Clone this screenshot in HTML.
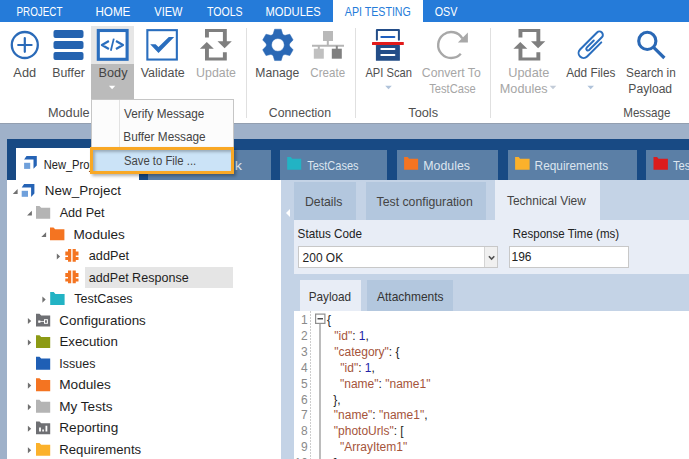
<!DOCTYPE html>
<html><head><meta charset="utf-8">
<style>
*{margin:0;padding:0;box-sizing:border-box}
html,body{width:689px;height:459px;overflow:hidden;background:#9fb1c9;font-family:"Liberation Sans",sans-serif}
.a{position:absolute}
</style></head><body>
<!-- menu bar -->
<div class="a" style="left:0;top:0;width:689px;height:22px;background:#257bd9"></div>
<div class="a" style="left:0;top:22px;width:689px;height:1px;background:#70a8e6"></div>
<div class="a" style="left:332.5px;top:0;width:90.5px;height:23px;background:#fff"></div>
<svg class="a" style="left:0;top:0" width="689" height="459" font-family="Liberation Sans"><text transform="matrix(0.8206,0,0,1,16.48,15.80)" font-size="12" fill="#ffffff">PROJECT</text><text transform="matrix(0.9722,0,0,1,95.41,15.80)" font-size="12" fill="#ffffff">HOME</text><text transform="matrix(0.9221,0,0,1,154.30,15.80)" font-size="12" fill="#ffffff">VIEW</text><text transform="matrix(0.8818,0,0,1,207.01,15.80)" font-size="12" fill="#ffffff">TOOLS</text><text transform="matrix(0.9309,0,0,1,265.56,15.80)" font-size="12" fill="#ffffff">MODULES</text><text transform="matrix(0.8965,0,0,1,434.66,15.80)" font-size="12" fill="#ffffff">OSV</text><text transform="matrix(0.8880,0,0,1,344.81,15.80)" font-size="12" fill="#257bd9">API TESTING</text></svg>
<!-- ribbon -->
<div class="a" style="left:0;top:22px;width:689px;height:101px;background:#fff"></div>
<div class="a" style="left:246px;top:28px;width:1px;height:90px;background:#e0e0e0"></div>
<div class="a" style="left:355px;top:28px;width:1px;height:90px;background:#e0e0e0"></div>
<div class="a" style="left:490px;top:28px;width:1px;height:90px;background:#e0e0e0"></div>
<div class="a" style="left:91px;top:26px;width:43px;height:38px;background:#e6e6e6"></div>
<div class="a" style="left:91px;top:63.5px;width:43px;height:35.5px;background:#bbbbbb"></div>
<svg class="a" style="left:0;top:0" width="689" height="123" viewBox="0 0 689 123">
 <!-- Add -->
 <circle cx="24.8" cy="45" r="13" fill="none" stroke="#2a6ab8" stroke-width="2.3"/>
 <path d="M18.2 45H31.6M24.8 38V51.8" stroke="#2a6ab8" stroke-width="2.2" stroke-linecap="round"/>
 <!-- Buffer -->
 <rect x="53.5" y="30" width="30" height="8" rx="2" fill="#2563b0"/>
 <rect x="53.5" y="41" width="30" height="8" rx="2" fill="#2563b0"/>
 <rect x="53.5" y="52" width="30" height="8" rx="2" fill="#2563b0"/>
 <!-- Body -->
 <rect x="98.3" y="30.5" width="28.8" height="28.8" fill="#fff" stroke="#2a6ebe" stroke-width="3.1"/>
 <path d="M108.9 41L101.9 45L108.9 49M116 41L123 45L116 49" fill="none" stroke="#2a6ebe" stroke-width="2.2" stroke-linejoin="round"/>
 <path d="M113.8 38.6L110.8 50.8" stroke="#2a6ebe" stroke-width="1.8"/>
 <!-- Validate -->
 <rect x="147.35" y="30.15" width="29.5" height="29.4" fill="none" stroke="#2a6ebe" stroke-width="2.1"/>
 <path d="M150.2 44.2H155.6L158.5 47.1L168.8 37H174.2L158.5 52.9Z" fill="#2a6ebe"/>
 <!-- Update -->
 <g fill="#7f7f7f" id="upd">
  <path d="M205 29.1H226.8V41.3H231.8L224.6 48.3L217.5 41.3H222.9V32.1H208.9V37.6H205Z"/>
  <path d="M206.8 41.9L213.8 48.8H208.9V57.4H222.9V52.3H226.8V60.4H205V48.8H199.9Z"/>
 </g>
 <!-- Manage gear -->
 <path fill="#2a68b5" fill-rule="evenodd" stroke="#2a68b5" stroke-width="0.5" stroke-linejoin="round" d="M273.30 33.60L274.60 29.24L281.20 29.24L282.50 33.60Q283.20 35.72 285.39 35.27L289.81 34.21L293.11 39.93L289.99 43.23Q288.50 44.90 289.99 46.57L293.11 49.87L289.81 55.59L285.39 54.53Q283.20 54.08 282.50 56.20L281.20 60.56L274.60 60.56L273.30 56.20Q272.60 54.08 270.41 54.53L265.99 55.59L262.69 49.87L265.81 46.57Q267.30 44.90 265.81 43.23L262.69 39.93L265.99 34.21L270.41 35.27Q272.60 35.72 273.30 33.60ZM284.30 44.9A6.4 6.4 0 1 0 271.50 44.9A6.4 6.4 0 1 0 284.30 44.9Z"/>
 <!-- Create -->
 <rect x="323" y="31" width="10" height="10" fill="#b9b9b9"/>
 <path d="M327.8 40.5V45.8M312 45.8H344M318.8 45.8V49" stroke="#b5b5b5" stroke-width="2"/>
 <path d="M336.8 45.8V49" stroke="#888" stroke-width="2"/>
 <rect x="313.8" y="48.7" width="10" height="10" fill="#c0c0c0"/>
 <rect x="331.8" y="48.7" width="10" height="10" fill="#808080"/>
 <!-- API Scan -->
 <path d="M376.9 39.7V30.1H398.9V39.7" fill="none" stroke="#234d88" stroke-width="2" stroke-linecap="round" stroke-linejoin="round"/>
 <path d="M381.3 37H394.4" stroke="#1f5fbf" stroke-width="2" stroke-linecap="round"/>
 <rect x="375.9" y="44.9" width="24" height="15.9" rx="0.6" fill="#234d88"/>
 <rect x="372" y="41.9" width="31.8" height="3" rx="0.5" fill="#e21b1b"/>
 <path d="M381.3 49H394.4M381.3 55H394.4" stroke="#fff" stroke-width="2" stroke-linecap="round"/>
 <!-- Convert -->
 <path d="M460.8 53.8A13 13 0 1 1 462.3 38.3" fill="none" stroke="#a8a8a8" stroke-width="2.4"/>
 <path d="M467.9 32.5V42.6H457.9Z" fill="#a8a8a8"/>
 <!-- Update Modules -->
 <g fill="#7f7f7f" transform="translate(313.5,0)">
  <path d="M205 29.1H226.8V41.3H231.8L224.6 48.3L217.5 41.3H222.9V32.1H208.9V37.6H205Z"/>
  <path d="M206.8 41.9L213.8 48.8H208.9V57.4H222.9V52.3H226.8V60.4H205V48.8H199.9Z"/>
 </g>
 <!-- Add files paperclip -->
 <path d="M600.68 41.4L586.54 55.54A5 5 0 0 1 579.46 48.46L596.43 31.49A3.4 3.4 0 0 1 601.24 36.3L588.51 49.03A1.7 1.7 0 0 1 586.11 46.63L593.18 39.56" fill="none" stroke="#2a6ebe" stroke-width="2" stroke-linecap="round" transform="translate(0.6,1)"/>
 <!-- Search -->
 <circle cx="647.3" cy="40.9" r="8.6" fill="none" stroke="#2a68b5" stroke-width="3.1"/>
 <path d="M653.6 47.4L664.4 58" stroke="#2a68b5" stroke-width="3.2"/>
 <!-- dropdown arrows -->
 <path d="M385.2 85.8H391.8L388.5 89.3Z" fill="#b0c3da"/>
 <path d="M549.7 85.8H556.3L553 89.3Z" fill="#c3ccd8"/>
 <path d="M587.4 85.8H594L590.7 89.3Z" fill="#b0c3da"/>
 <path d="M108.9 85.8H115.3L112.1 89.3Z" fill="#fff"/>
</svg>
<svg class="a" style="left:0;top:0" width="689" height="459" font-family="Liberation Sans"><text transform="matrix(1.0666,0,0,1,13.36,76.80)" font-size="12" fill="#4f4f4f">Add</text><text transform="matrix(1.0267,0,0,1,52.25,76.80)" font-size="12" fill="#4f4f4f">Buffer</text><text transform="matrix(1.0565,0,0,1,98.62,76.80)" font-size="12" fill="#444">Body</text><text transform="matrix(1.0401,0,0,1,140.66,76.80)" font-size="12" fill="#4f4f4f">Validate</text><text transform="matrix(1.0336,0,0,1,196.06,76.80)" font-size="12" fill="#a6a6a6">Update</text><text transform="matrix(1.0134,0,0,1,255.27,76.80)" font-size="12" fill="#4f4f4f">Manage</text><text transform="matrix(0.9658,0,0,1,310.37,76.80)" font-size="12" fill="#a6a6a6">Create</text><text transform="matrix(0.9303,0,0,1,365.40,76.80)" font-size="12" fill="#4f4f4f">API Scan</text><text transform="matrix(1.0195,0,0,1,421.80,76.80)" font-size="12" fill="#a6a6a6">Convert To</text><text transform="matrix(0.9304,0,0,1,429.20,92.60)" font-size="12" fill="#a6a6a6">TestCase</text><text transform="matrix(1.0608,0,0,1,508.33,76.80)" font-size="12" fill="#a6a6a6">Update</text><text transform="matrix(1.0547,0,0,1,499.82,92.60)" font-size="12" fill="#a6a6a6">Modules</text><text transform="matrix(0.9848,0,0,1,566.18,76.80)" font-size="12" fill="#4f4f4f">Add Files</text><text transform="matrix(0.9814,0,0,1,626.06,76.80)" font-size="12" fill="#4f4f4f">Search in</text><text transform="matrix(1.0084,0,0,1,628.37,92.60)" font-size="12" fill="#4f4f4f">Payload</text><text transform="matrix(1.0599,0,0,1,47.92,116.90)" font-size="12" fill="#4f4f4f">Module</text><text transform="matrix(1.0257,0,0,1,268.80,116.90)" font-size="12" fill="#4f4f4f">Connection</text><text transform="matrix(1.0643,0,0,1,408.25,116.90)" font-size="12" fill="#4f4f4f">Tools</text><text transform="matrix(0.9692,0,0,1,623.22,116.90)" font-size="12" fill="#4f4f4f">Message</text></svg>

<div class="a" style="left:0;top:123px;width:689px;height:1px;background:#939fb0"></div>
<!-- tab strip -->
<div class="a" style="left:7px;top:139px;width:682px;height:41px;background:#184a84"></div>
<div class="a" style="left:16px;top:148px;width:123px;height:32px;background:#fff"></div>
<div class="a" style="left:148px;top:150px;width:122.5px;height:30px;background:#5b7fa6"></div>
<div class="a" style="left:280px;top:150px;width:106.6px;height:30px;background:#5b7fa6"></div>
<div class="a" style="left:396.7px;top:150px;width:101.3px;height:30px;background:#5b7fa6"></div>
<div class="a" style="left:507.8px;top:150px;width:128.8px;height:30px;background:#5b7fa6"></div>
<div class="a" style="left:646px;top:150px;width:60px;height:30px;background:#5b7fa6"></div>
<svg class="a" style="left:0;top:0" width="689" height="180">
 <path d="M26.5 156H36.8V165.6L33.5 168.8V159.5H24.1Z" fill="#2563b5"/>
 <rect x="24.1" y="162.8" width="6.1" height="6.1" fill="#6fa0db"/>
 <path d="M287.2 157H290.8L292.2 158.8H301.2V169.8H287.2Z" fill="#22b3c4"/>
 <path d="M404.1 157H407.7L409.1 158.8H418.1V169.8H404.1Z" fill="#f47421"/>
 <path d="M515.1 157H518.7L520.1 158.8H529.6V169.8H515.1Z" fill="#fbb12b"/>
 <path d="M653.5 157H657.1L658.5 158.8H667.9V169.8H653.5Z" fill="#dd1c1c"/>
</svg>
<svg class="a" style="left:0;top:0" width="689" height="459" font-family="Liberation Sans"><text transform="matrix(0.8986,0,0,1,43.67,169.40)" font-size="12.4" fill="#222222">New_Project</text><text transform="matrix(1.1997,0,0,1,234.68,169.80)" font-size="12" fill="#dce5ef">k</text><text transform="matrix(0.9007,0,0,1,307.19,169.80)" font-size="12.2" fill="#dce5ef">TestCases</text><text transform="matrix(1.0133,0,0,1,423.26,169.80)" font-size="12.2" fill="#dce5ef">Modules</text><text transform="matrix(0.9705,0,0,1,534.61,169.80)" font-size="12.2" fill="#dce5ef">Requirements</text><text transform="matrix(0.9200,0,0,1,672.88,169.80)" font-size="12.2" fill="#dce5ef">TestCases</text></svg>

<!-- tree -->
<div class="a" style="left:7px;top:180px;width:274px;height:279px;background:#fff"></div>
<div class="a" style="left:85px;top:267px;width:148px;height:21px;background:#e5e5e5"></div>
<svg class="a" style="left:0;top:0" width="281" height="459">
 <g fill="#707070">
  <path d="M17.6 189.1V193.9H12.8Z"/>
  <path d="M31.85 210.7V215.5H27.05Z"/>
  <path d="M46.1 232.3V237.1H41.3Z"/>
  <path d="M56.8 253.4L60.1 256.4L56.8 259.5Z"/>
  <path d="M42.4 296.6L45.7 299.6L42.4 302.7Z"/>
  <path d="M27.9 317.9L31.2 320.9L27.9 324Z"/>
  <path d="M27.9 339.45L31.2 342.45L27.9 345.55Z"/>
  <path d="M27.9 382.55L31.2 385.55L27.9 388.65Z"/>
  <path d="M27.9 404.1L31.2 407.1L27.9 410.2Z"/>
  <path d="M27.9 425.65L31.2 428.65L27.9 431.75Z"/>
  <path d="M27.9 447.2L31.2 450.2L27.9 453.3Z"/>
 </g>
 <!-- project icon -->
 <path d="M24.1 184H34.4V193.6L31.1 196.9V187.5H21.7Z" fill="#2563b5"/>
 <rect x="21.7" y="190.8" width="6.3" height="6" fill="#6fa0db"/>
 <!-- folders: x, top -->
 <path d="M36 205.9H39.5L41.2 207.7H50.2V218.8H36Z" fill="#b4b4b4"/>
 <path d="M50 227.45H53.5L55.2 229.25H64.4V240.35H50Z" fill="#f47421"/>
 <path d="M50.2 292.1H53.7L55.4 293.9H64.6V305H50.2Z" fill="#22b3c4"/>
 <path d="M36 313.65H39.5L41.2 315.45H50.2V326.55H36Z" fill="#6e6f73"/>
 <path d="M38.2 320.5H40.4V322.7H38.2Z M40.4 321.3H44V322H40.4Z" fill="#fff"/>
 <rect x="44.5" y="319.7" width="2.9" height="3.6" fill="none" stroke="#fff" stroke-width="1"/>
 <path d="M36 335.2H39.5L41.2 337H50.2V348.1H36Z" fill="#8c9a14"/>
 <path d="M36 356.75H39.5L41.2 358.55H50.2V369.65H36Z" fill="#1f5fb5"/>
 <path d="M36 378.3H39.5L41.2 380.1H50.2V391.2H36Z" fill="#f47421"/>
 <path d="M36 399.85H39.5L41.2 401.65H50.2V412.75H36Z" fill="#b4b4b4"/>
 <path d="M36 421.4H39.5L41.2 423.2H50.2V434.3H36Z" fill="#6e6f73"/>
 <path d="M39.1 427.5H40.9V431.6H39.1Z M42.3 429.4H43.9V431.6H42.3Z M45.5 425.7H47.3V431.6H45.5Z" fill="#fff"/>
 <path d="M36 442.95H39.5L41.2 444.75H50.2V455.85H36Z" fill="#fbb12b"/>
 <!-- module icons -->
 <g fill="#f47421">
  <path d="M68 249H71.2V261.8H68V260H65.3V257H68V255.5H65.3V251.5H68Z"/>
  <path d="M72.6 249H75.8V251.5H78.5V255.5H75.8V257H78.5V260H75.8V261.8H72.6Z"/>
  <path d="M68 270.5H71.2V283.3H68V281.5H65.3V278.5H68V277H65.3V273H68Z"/>
  <path d="M72.6 270.5H75.8V273H78.5V277H75.8V278.5H78.5V281.5H75.8V283.3H72.6Z"/>
 </g>
</svg>
<svg class="a" style="left:0;top:0" width="689" height="459" font-family="Liberation Sans"><text transform="matrix(1.0662,0,0,1,44.87,195.40)" font-size="12.6" fill="#1e1e1e">New_Project</text><text transform="matrix(1.0027,0,0,1,59.67,216.95)" font-size="12.6" fill="#1e1e1e">Add Pet</text><text transform="matrix(1.0790,0,0,1,73.55,238.50)" font-size="12.6" fill="#1e1e1e">Modules</text><text transform="matrix(1.0085,0,0,1,88.79,260.05)" font-size="12.6" fill="#1e1e1e">addPet</text><text transform="matrix(0.9982,0,0,1,88.79,281.60)" font-size="12.6" fill="#1e1e1e">addPet Response</text><text transform="matrix(0.9928,0,0,1,74.26,303.15)" font-size="12.6" fill="#1e1e1e">TestCases</text><text transform="matrix(1.0652,0,0,1,59.37,324.70)" font-size="12.6" fill="#1e1e1e">Configurations</text><text transform="matrix(1.0572,0,0,1,59.38,346.25)" font-size="12.6" fill="#1e1e1e">Execution</text><text transform="matrix(0.9917,0,0,1,59.33,367.80)" font-size="12.6" fill="#1e1e1e">Issues</text><text transform="matrix(1.0834,0,0,1,59.25,389.35)" font-size="12.6" fill="#1e1e1e">Modules</text><text transform="matrix(1.0757,0,0,1,59.26,410.90)" font-size="12.6" fill="#1e1e1e">My Tests</text><text transform="matrix(1.0807,0,0,1,59.25,432.45)" font-size="12.6" fill="#1e1e1e">Reporting</text><text transform="matrix(1.0443,0,0,1,59.29,454.00)" font-size="12.6" fill="#1e1e1e">Requirements</text></svg>

<!-- right panel -->
<div class="a" style="left:281px;top:180px;width:408px;height:279px;background:#c4d3e6"></div>
<svg class="a" style="left:281px;top:180px" width="13" height="60"><path d="M9 29V37L5 33Z" fill="#fff"/></svg>
<div class="a" style="left:294px;top:182px;width:62px;height:38px;background:#b3c7de"></div>
<div class="a" style="left:365.6px;top:182px;width:120.4px;height:38px;background:#b3c7de"></div>
<div class="a" style="left:495px;top:180px;width:105px;height:40px;background:#e8edf6"></div>
<div class="a" style="left:294px;top:220px;width:395px;height:54px;background:#e8edf6"></div>
<div class="a" style="left:298px;top:246px;width:200px;height:22px;background:#fff;border:1px solid #c8c8c8"></div>
<div class="a" style="left:484px;top:247px;width:13px;height:20px;background:#f0f0f0;border-left:1px solid #d4d4d4"></div>
<svg class="a" style="left:484px;top:247px" width="13" height="20"><path d="M4.9 9.2L7.6 12L10.3 9.2" fill="none" stroke="#505050" stroke-width="1.6"/></svg>
<div class="a" style="left:509px;top:246px;width:119.5px;height:22px;background:#fff;border:1px solid #c8c8c8"></div>
<div class="a" style="left:300px;top:280px;width:61px;height:31px;background:#e8edf6"></div>
<div class="a" style="left:367px;top:280px;width:86px;height:31px;background:#b3c7de"></div>
<svg class="a" style="left:0;top:0" width="689" height="459" font-family="Liberation Sans"><text transform="matrix(1.0217,0,0,1,304.96,205.60)" font-size="12" fill="#444444">Details</text><text transform="matrix(1.0242,0,0,1,376.57,205.60)" font-size="12" fill="#444444">Test configuration</text><text transform="matrix(0.9974,0,0,1,506.98,205.00)" font-size="12" fill="#444444">Technical View</text><text transform="matrix(0.9769,0,0,1,297.57,238.20)" font-size="12" fill="#222222">Status Code</text><text transform="matrix(0.9617,0,0,1,512.73,238.30)" font-size="12" fill="#222222">Response Time (ms)</text><text transform="matrix(0.9967,0,0,1,302.59,261.80)" font-size="12" fill="#222222">200 OK</text><text transform="matrix(0.9986,0,0,1,511.51,261.00)" font-size="12" fill="#222222">196</text><text transform="matrix(0.9796,0,0,1,308.71,300.50)" font-size="12" fill="#333333">Payload</text><text transform="matrix(0.9995,0,0,1,376.98,300.50)" font-size="12" fill="#333333">Attachments</text></svg>

<!-- editor -->
<div class="a" style="left:294px;top:310.5px;width:395px;height:149px;background:#fff"></div>
<div class="a" style="left:310px;top:311px;width:1px;height:148px;background:repeating-linear-gradient(to bottom,#cdcdcd 0 2px,#fff 2px 3px)"></div>
<svg class="a" style="left:294px;top:310px" width="40" height="149">
 <rect x="21.6" y="4.1" width="9.3" height="9.3" fill="#fff" stroke="#8f8f8f" stroke-width="1.2"/>
 <path d="M23.5 8.75H29" stroke="#444" stroke-width="1.4"/>
 <path d="M26 13.8V149" stroke="#a0a0a0" stroke-width="1.4"/>
</svg>
<svg class="a" style="left:0;top:0" width="689" height="459" font-family="Liberation Sans" font-size="12"><text x="301.0" y="324.00" fill="#8a8a8a">1</text><text x="327.10" y="324.00" style="white-space:pre" xml:space="preserve"><tspan fill="#222222">{</tspan></text><text x="301.0" y="339.90" fill="#8a8a8a">2</text><text x="334.30" y="339.90" style="white-space:pre" xml:space="preserve"><tspan fill="#a5543a">"id"</tspan><tspan fill="#222222">: </tspan><tspan fill="#2323a8">1</tspan><tspan fill="#222222">,</tspan></text><text x="301.0" y="355.80" fill="#8a8a8a">3</text><text x="334.30" y="355.80" style="white-space:pre" xml:space="preserve"><tspan fill="#a5543a">"category"</tspan><tspan fill="#222222">: {</tspan></text><text x="301.0" y="371.70" fill="#8a8a8a">4</text><text x="340.30" y="371.70" style="white-space:pre" xml:space="preserve"><tspan fill="#a5543a">"id"</tspan><tspan fill="#222222">: </tspan><tspan fill="#2323a8">1</tspan><tspan fill="#222222">,</tspan></text><text x="301.0" y="387.60" fill="#8a8a8a">5</text><text x="340.00" y="387.60" style="white-space:pre" xml:space="preserve"><tspan fill="#a5543a">"name"</tspan><tspan fill="#222222">: </tspan><tspan fill="#a5543a">"name1"</tspan></text><text x="301.0" y="403.50" fill="#8a8a8a">6</text><text x="333.30" y="403.50" style="white-space:pre" xml:space="preserve"><tspan fill="#222222">},</tspan></text><text x="301.0" y="419.40" fill="#8a8a8a">7</text><text x="333.80" y="419.40" style="white-space:pre" xml:space="preserve"><tspan fill="#a5543a">"name"</tspan><tspan fill="#222222">: </tspan><tspan fill="#a5543a">"name1"</tspan><tspan fill="#222222">,</tspan></text><text x="301.0" y="435.30" fill="#8a8a8a">8</text><text x="333.80" y="435.30" style="white-space:pre" xml:space="preserve"><tspan fill="#a5543a">"photoUrls"</tspan><tspan fill="#222222">: [</tspan></text><text x="301.0" y="451.20" fill="#8a8a8a">9</text><text x="340.00" y="451.20" style="white-space:pre" xml:space="preserve"><tspan fill="#a5543a">"ArrayItem1"</tspan></text><text x="294.5" y="467.10" fill="#8a8a8a">10</text><text x="333.80" y="467.10" style="white-space:pre" xml:space="preserve"><tspan fill="#222222">],</tspan></text></svg>

<!-- popup -->
<div class="a" style="left:91px;top:99px;width:143px;height:75px;background:#fcfcfc;border:1px solid #c6c6c6"></div>
<div class="a" style="left:119px;top:100px;width:1px;height:47px;background:#e2e2e2"></div>
<div class="a" style="left:90.3px;top:147.1px;width:144.2px;height:26.6px;background:#cbe3f7;border:3.1px solid #f9a825;box-shadow:inset 2px 2px 3px rgba(0,0,0,0.25),2px 2px 3px rgba(0,0,0,0.3)"></div>
<svg class="a" style="left:0;top:0" width="689" height="459" font-family="Liberation Sans"><text transform="matrix(0.9788,0,0,1,124.08,117.60)" font-size="12" fill="#444444">Verify Message</text><text transform="matrix(0.9839,0,0,1,123.30,141.00)" font-size="12" fill="#444444">Buffer Message</text><text transform="matrix(0.9426,0,0,1,123.91,165.00)" font-size="12" fill="#444444">Save to File ...</text></svg>
</body></html>
